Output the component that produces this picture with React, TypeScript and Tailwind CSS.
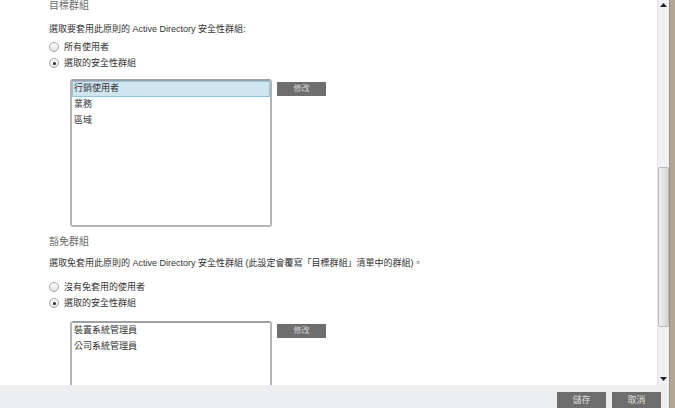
const font = '[font-family:"Liberation_Sans","Noto_Sans_CJK_TC",sans-serif]';

function Radio({ label, checked }: { label: string; checked?: boolean }) {
  return (
    <div className="flex items-center h-[16px]">
      <span className="w-[10px] h-[10px] rounded-full border border-[#a3a3a3] bg-gradient-to-b from-[#fdfdfd] to-[#e2e2e2] flex items-center justify-center">
        {checked && <span className="w-[3px] h-[3px] rounded-full bg-[#2a2a2a]" />}
      </span>
      <span className="ml-[5px] text-[9px] leading-[12px] text-[#333]">{label}</span>
    </div>
  );
}

function GroupList({ items, selected, height }: { items: string[]; selected?: number; height: string }) {
  return (
    <div className="flex ml-[21px]">
      <div className={`w-[202px] ${height} border-2 border-[#b3b5b8] border-t-[#9ea1a4] rounded-[3px] bg-white`}>
        {items.map((item, i) => (
          <div
            key={item}
            className={`h-[16px] px-[1px] flex items-center text-[9px] text-[#333] ${
              i === selected ? 'bg-[#cfe6f0] border border-[#93c6d8]' : 'border border-transparent'
            }`}
          >
            {item}
          </div>
        ))}
      </div>
      <button className="ml-[5px] mt-[3px] w-[49px] h-[14px] bg-[#6e6e6e] text-[#d4d4d4] text-[8px] leading-[14px] text-center">
        修改
      </button>
    </div>
  );
}

export default function App() {
  return (
    <div className={`w-[675px] h-[408px] flex bg-white overflow-hidden ${font}`}>
      <div className="flex-1 flex flex-col">
        <div className="h-[385px] flex">
          {/* Scrolled page content */}
          <div className="flex-1 overflow-hidden pl-[49px]">
            <div className="text-[10px] leading-[12px] text-[#6b6b6b]">目標群組</div>
            <div className="mt-[11px] text-[9px] leading-[12px] text-[#333]">
              選取要套用此原則的 Active Directory 安全性群組:
            </div>
            <div className="mt-[4px]">
              <Radio label="所有使用者" />
              <Radio label="選取的安全性群組" checked />
            </div>
            <div className="mt-[8px]">
              <GroupList items={['行銷使用者', '業務', '區域']} selected={0} height="h-[148px]" />
            </div>

            <div className="mt-[9px] text-[10px] leading-[12px] text-[#6b6b6b]">豁免群組</div>
            <div className="mt-[9px] text-[9px] leading-[12px] text-[#333]">
              選取免套用此原則的 Active Directory 安全性群組 (此設定會覆寫「目標群組」清單中的群組)。
            </div>
            <div className="mt-[10px]">
              <Radio label="沒有免套用的使用者" />
              <Radio label="選取的安全性群組" checked />
            </div>
            <div className="mt-[10px]">
              <GroupList items={['裝置系統管理員', '公司系統管理員']} height="h-[148px]" />
            </div>
          </div>

          {/* Scrollbar */}
          <div className="w-[12px] bg-[#f0f0f0] border-l border-[#e4e4e4] flex flex-col items-center">
            <svg width="7" height="4" viewBox="0 0 7 4" className="mt-[3px]">
              <path d="M0 4 L3.5 0 L7 4 Z" fill="#222" />
            </svg>
            <div className="mt-[160px] w-[11px] h-[160px] rounded-[2px] border border-[#b9b9b9] bg-gradient-to-r from-[#f2f2f2] to-[#d5d5d5]" />
            <div className="flex-1" />
            <svg width="7" height="4" viewBox="0 0 7 4" className="mb-[4px]">
              <path d="M0 0 L7 0 L3.5 4 Z" fill="#222" />
            </svg>
          </div>
        </div>

        {/* Footer */}
        <div className="h-[23px] bg-[#eceef0] flex items-center justify-end gap-[6px] pr-[8px] pt-[6px]">
          <button className="w-[49px] h-[16px] bg-[#6e6e6e] text-[#dcdcdc] text-[9px] leading-[16px]">儲存</button>
          <button className="w-[49px] h-[16px] bg-[#6e6e6e] text-[#dcdcdc] text-[9px] leading-[16px]">取消</button>
        </div>
      </div>
      <div className="w-[6px] bg-[#b2a694] border-l border-[#9c907f]" />
    </div>
  );
}
